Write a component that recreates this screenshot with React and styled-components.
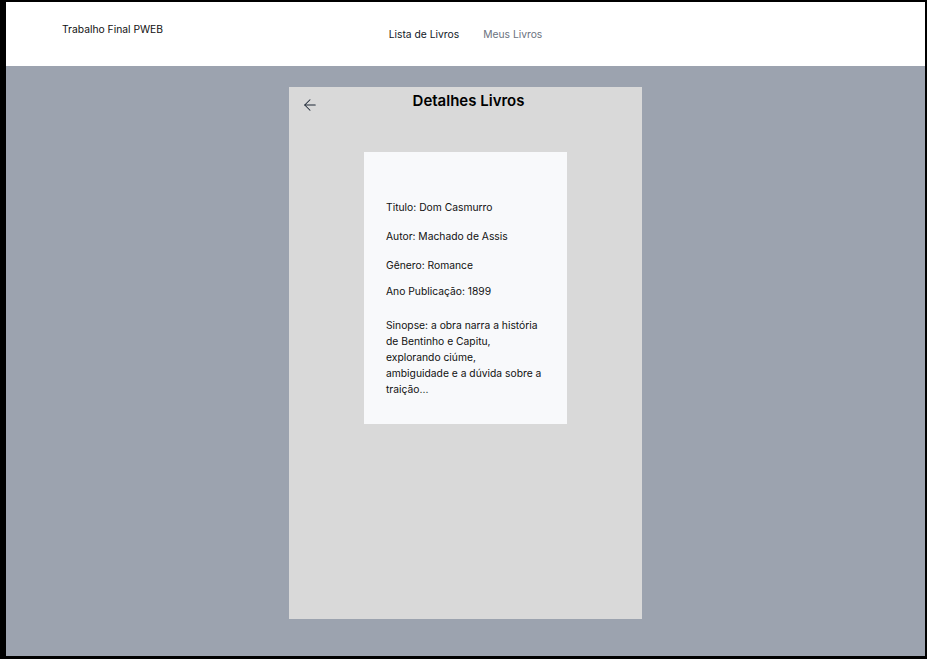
import styled, { createGlobalStyle } from 'styled-components';
import { ArrowLeft } from 'lucide-react';

const GlobalStyle = createGlobalStyle`
  html, body {
    margin: 0;
    padding: 0;
    background: #000;
  }
  body {
    font-family: Inter, "Noto Sans", sans-serif;
  }
`;

const Frame = styled.div`
  margin: 2px 2px 3px 6px;
  height: 654px;
  display: flex;
  flex-direction: column;
  background: #9ca3af;
`;

const Header = styled.header`
  height: 64px;
  background: #fff;
  display: grid;
  grid-template-columns: 1fr auto 1fr;
`;

const Brand = styled.div`
  padding: 21px 0 0 56px;
  font-size: 10.3px;
  color: #111;
`;

const Nav = styled.nav`
  display: flex;
  gap: 24px;
  padding-top: 26px;
`;

const NavLink = styled.a`
  font-size: 10.3px;
  color: ${p => (p.$active ? '#111827' : '#6b7280')};
  text-decoration: none;
  cursor: pointer;
`;

const Main = styled.main`
  flex: 1;
  display: flex;
  justify-content: center;
  padding-top: 21px;
`;

const Panel = styled.section`
  width: 353px;
  height: 532px;
  background: #d9d9d9;
  display: flex;
  flex-direction: column;
  align-items: center;
  position: relative;
`;

const BackButton = styled.button`
  position: absolute;
  left: 12px;
  top: 9px;
  background: none;
  border: none;
  padding: 0;
  color: #1f2937;
  cursor: pointer;
  display: flex;
`;

const Title = styled.h1`
  margin: 4px 0 0 6px;
  font-size: 15px;
  font-weight: 600;
  color: #000;
  line-height: 20px;
`;

const Card = styled.div`
  margin-top: 41px;
  width: 203px;
  height: 272px;
  box-sizing: border-box;
  background: #f8f9fb;
  padding: 47px 16px 0 22px;
`;

const Field = styled.p`
  margin: 0 0 ${p => p.$gap || 0}px;
  font-size: 10.3px;
  line-height: 16px;
  color: #111;
`;

const Line = styled.span`
  display: block;
  white-space: nowrap;
`;

const fields = [
  { lines: ['Titulo: Dom Casmurro'], gap: 13 },
  { lines: ['Autor: Machado de Assis'], gap: 13 },
  { lines: ['Gênero: Romance'], gap: 10 },
  { lines: ['Ano Publicação: 1899'], gap: 18 },
  {
    lines: [
      'Sinopse: a obra narra a história',
      'de Bentinho e Capitu,',
      'explorando ciúme,',
      'ambiguidade e a dúvida sobre a',
      'traição...',
    ],
  },
];

export default function App() {
  return (
    <>
      <GlobalStyle />
      <Frame>
        <Header>
          <Brand>Trabalho Final PWEB</Brand>
          <Nav>
            <NavLink $active>Lista de Livros</NavLink>
            <NavLink>Meus Livros</NavLink>
          </Nav>
          <div />
        </Header>
        <Main>
          <Panel>
            <BackButton aria-label="Voltar">
              <ArrowLeft size={18} strokeWidth={1.4} />
            </BackButton>
            <Title>Detalhes Livros</Title>
            <Card>
              {fields.map(f => (
                <Field key={f.lines[0]} $gap={f.gap}>
                  {f.lines.map(l => (
                    <Line key={l}>{l}</Line>
                  ))}
                </Field>
              ))}
            </Card>
          </Panel>
        </Main>
      </Frame>
    </>
  );
}
